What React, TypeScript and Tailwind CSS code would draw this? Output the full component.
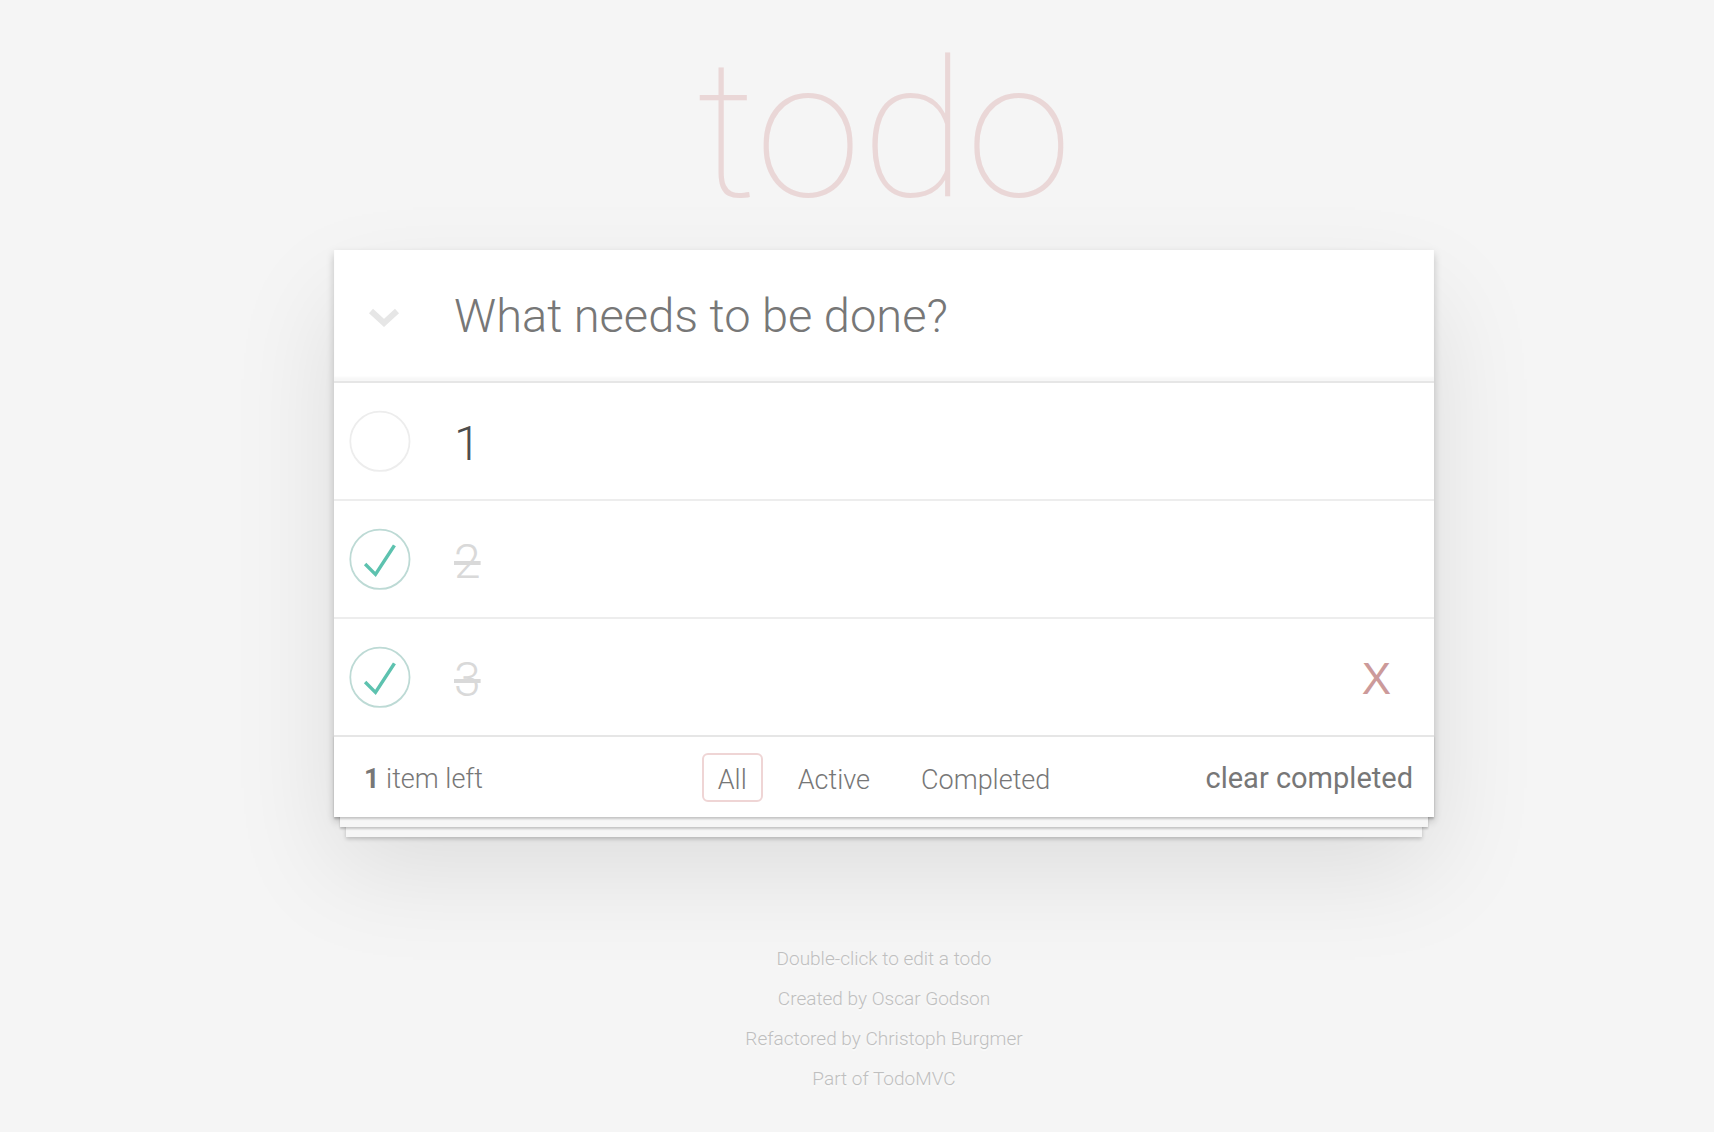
import React from "react";

const FONT = "[font-family:Roboto,'Helvetica_Neue',Arial,sans-serif]";

function Toggle({ done }: { done: boolean }) {
  return (
    <svg width="80" height="80" viewBox="-10 -18 100 135" className="shrink-0">
      <circle cx="50" cy="50" r="50" fill="none" stroke={done ? "#bddad5" : "#ededed"} strokeWidth="3" />
      {done && <path fill="#5dc2af" d="M72 25L42 71 27 56l-4 4 20 20 34-52z" />}
    </svg>
  );
}

function Row({ text, done, hover }: { text: string; done: boolean; hover?: boolean }) {
  return (
    <li className="flex h-[118px] items-start border-b-2 border-[#ededed] bg-white">
      <div className="flex h-[116px] w-[80px] items-center justify-start">
        <Toggle done={done} />
      </div>
      <div
        className={
          "ml-[40px] pt-[32px] text-[48px] leading-[58px] font-light flex-1 " +
          (done ? "text-[#d9d9d9] line-through decoration-4" : "text-[#4d4d4d]")
        }
      >
        {text}
      </div>
      {hover && (
        <div className="mr-[43px] flex h-[116px] items-center pt-[4px] text-[44px] font-normal text-[#cc9a9a] [font-family:'Liberation_Sans',Arial,sans-serif]">
          X
        </div>
      )}
    </li>
  );
}

export default function App() {
  return (
    <div className={"min-h-screen w-full bg-[#f5f5f5] pl-[54px] " + FONT}>
      <div className="flex flex-col items-center">
        <h1 className="pt-[31px] mb-[22px] h-[250px] text-[192px] leading-[200px] font-thin text-[#ead7d7] text-center">
          todo
        </h1>
        <section className="w-[1100px] bg-white shadow-[0_4px_8px_0_rgba(0,0,0,0.2),0_50px_100px_0_rgba(0,0,0,0.1)] -mt-[22px]">
          <header className="flex h-[133px] items-start border-b-2 border-[#e6e6e6] shadow-[inset_0_-4px_2px_rgba(0,0,0,0.03)]">
            <div className="flex h-[131px] w-[120px] items-center justify-start pl-[34px] pt-[4px]">
              <svg width="32" height="22" viewBox="0 0 32 22">
                <polyline points="3,4 16,16 29,4" fill="none" stroke="#e6e6e6" strokeWidth="6" strokeLinejoin="miter" />
              </svg>
            </div>
            <div className="pt-[32px] text-[47px] leading-[67px] font-light text-[#777]">What needs to be done?</div>
          </header>
          <ul>
            <Row text="1" done={false} />
            <Row text="2" done={true} />
            <Row text="3" done={true} hover />
          </ul>
          <footer className="relative -mt-[2px] flex h-[82px] items-center border-t-2 border-[#e6e6e6] px-[30px] text-[27px] text-[#777] shadow-[0_2px_2px_rgba(0,0,0,0.2),0_16px_0_-6px_#f6f6f6,0_18px_2px_-6px_rgba(0,0,0,0.2),0_32px_0_-12px_#f6f6f6,0_34px_4px_-12px_rgba(0,0,0,0.2)] bg-white">
            <span className="mt-[4px] font-light">
              <strong className="font-bold">1</strong> item left
            </span>
            <div className="absolute inset-x-0 top-0 flex h-[80px] items-center justify-center pt-[0px] font-light">
              <a className="mx-[6px] rounded-[6px] border-2 border-[#efd5d5] px-[14px] pt-[9px] pb-[3px] leading-[33px]">All</a>
              <a className="mx-[6px] ml-[13px] rounded-[6px] border-2 border-transparent px-[14px] pt-[9px] pb-[3px] leading-[33px]">Active</a>
              <a className="mx-[6px] ml-[13px] rounded-[6px] border-2 border-transparent px-[14px] pt-[9px] pb-[3px] leading-[33px]">Completed</a>
            </div>
            <span className="relative mt-[4px] ml-auto mr-[-9px] text-[29px] font-normal">clear completed</span>
          </footer>
        </section>
        <div className="mt-[122px] text-center text-[19px] font-light text-[#bfbfbf] [text-shadow:0_2px_0_rgba(255,255,255,0.5)]">
          <p className="h-[40px] leading-[40px]">Double-click to edit a todo</p>
          <p className="h-[40px] leading-[40px]">Created by Oscar Godson</p>
          <p className="h-[40px] leading-[40px]">Refactored by Christoph Burgmer</p>
          <p className="h-[40px] leading-[40px]">Part of TodoMVC</p>
        </div>
      </div>
    </div>
  );
}
